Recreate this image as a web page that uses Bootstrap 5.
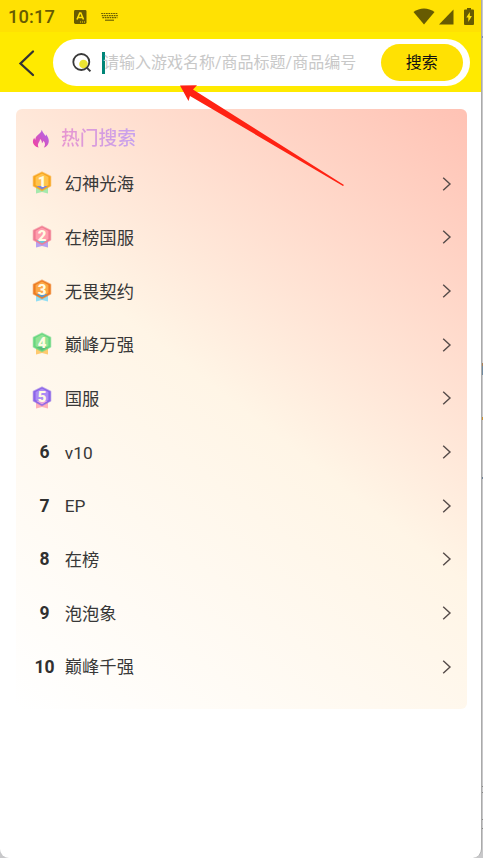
<!DOCTYPE html>
<html lang="zh-CN">
<head>
<meta charset="utf-8">
<meta name="viewport" content="width=device-width, initial-scale=1">
<title>搜索</title>
<link href="https://cdn.jsdelivr.net/npm/bootstrap@5.3.0/dist/css/bootstrap.min.css" rel="stylesheet">
<style>
html,body{height:858px;overflow:hidden}
body{background:#c8c8ca linear-gradient(#c8c8ca 0 36px,#8090b0 36px 38px,#c8c8ca 38px 363px,#a98058 363px 366px,#6f8aa0 366px 375px,#c8c8ca 375px 417px,#c89030 417px 420px,#c8c8ca 420px 477px,#6d7f94 477px 479px,#c8c8ca 479px 786px,#888 786px 787px,#c8c8ca 787px 792px,#888 792px 793px,#c8c8ca 793px 819px,#888 819px 820px,#c8c8ca 820px 828px,#888 828px 829px,#c8c8ca 829px);font-family:Roboto,"Noto Sans CJK SC",sans-serif;color:#333}
svg{display:block;flex:none}
.phone{width:482px;height:858px;background:#fff;border-right:1px solid #aaa;border-radius:0 0 9px 9px}
.statusbar{height:32px;background:#ffe103;color:#675b02;padding:1px 7px 0 8px}
.clock{font-size:18.3px;line-height:30px;width:66px;font-weight:500;letter-spacing:.1px}
.topbar{height:60px;background:#ffea00;padding:7px 11.5px 6px 17px}
.searchbox{height:47px;margin-left:16px;padding:0 6.5px 0 18px}
.caret{width:3px;height:22px;background:#008577;margin-left:9px}
.hint{font-size:16px;line-height:24px;color:#c8c8c8;margin-left:-2px;padding-top:1px}
.btn-search{width:82.5px;height:36.5px;background:#ffe103;color:#111;font-size:16px;line-height:24px;--bs-btn-padding-y:0;--bs-btn-border-width:0}
.btn-search{padding-top:1px}
.btn-search:hover{background:#ffd900}
.hot{margin:17px 14px 0 16px;height:600px;border-radius:6px;padding:12px 14px 0 15px;background:linear-gradient(38deg,#fff 0%,#fff5e6 50%,#ffc2b4 100%)}
.hot-title{height:36px;padding-bottom:1px}
.hot-title h1{font-size:18.8px;line-height:28px;font-weight:500;margin:0 0 0 10px;background:linear-gradient(90deg,#e796d0,#c6a2ee);-webkit-background-clip:text;background-clip:text;color:transparent}
.hot-row{height:53.67px}
.rank{width:33.8px;font-size:17.5px;font-weight:700;color:#303030}
.rank span{width:27px}
.rank svg{margin-top:-1px}
.word{font-size:17.3px;line-height:26px;color:#383838;padding-top:1px}
.pointer{left:178px;top:84px;z-index:3}
.hot-title h1,.word,.hint,.btn-search{white-space:nowrap}
</style>
</head>
<body>
<svg width="0" height="0" class="position-absolute" aria-hidden="true">
<defs>
<linearGradient id="flame" x1="1" y1="0" x2="0" y2="1"><stop stop-color="#a66cf2"/><stop offset="1" stop-color="#f63f9d"/></linearGradient>
<symbol id="next" viewBox="0 0 12 16"><path d="M2.2 1.8 9 8l-6.8 6.2" fill="none" stroke="#554b49" stroke-width="1.4"/></symbol>
<symbol id="medal" viewBox="0 0 20 23"><path d="M4 15v7.500l6-1.500 6 1.500V15z" fill="var(--ribbon)" opacity=".8"/><path d="M10 1.200 18.600 5.500v9.500L10 19.600 1.400 15V5.500z" fill="var(--edge)" stroke="var(--edge)" stroke-opacity=".55" stroke-width="1.400" stroke-linejoin="round"/><path d="M10 2.600 16.400 6v8L10 17.600 3.600 14V6z" fill="var(--face)"/><path d="M4.500 15h11L10 18.500z" fill="var(--base)"/></symbol>
</defs>
</svg>
<main class="phone position-relative">
<header>
<div class="statusbar d-flex align-items-center">
<span class="clock">10:17</span>
<svg width="13" height="14" viewBox="0 0 13 14"><rect width="12.5" height="14" rx="1.4" fill="#675b02"/><path d="M3 9.5 5.8 3h1L9.5 9.5M4.3 7.5h4" fill="none" stroke="#ffe103" stroke-width="1.6"/><path d="M6 12h1m1 0h1m1 0h1" stroke="#ffe103"/></svg>
<svg width="17" height="10" viewBox="0 0 17 10" fill="none" stroke="#675b02" stroke-width="1.2" style="margin-left:14px"><path d="M.2 1.5h17M.8 3.6h16M1.4 5.7h15" stroke-dasharray="1.7 .7"/><path d="M4 8.2h9" stroke-width="1.1"/></svg>
<svg class="ms-auto" width="22" height="17" viewBox="0 0 22 17"><path d="M.5 4.1C6.5-.7 15.5-.7 21.5 4.1L11 16.5z" fill="#675b02"/></svg>
<svg width="15" height="16" viewBox="0 0 15 16" class="ms-1"><path d="M14.5.5v15H0z" fill="#675b02"/></svg>
<svg width="10" height="17" viewBox="0 0 10 17" style="margin-left:10px"><path d="M3 0h4v1.6h2a1 1 0 0 1 1 1V16a1 1 0 0 1-1 1H1a1 1 0 0 1-1-1V2.600a1 1 0 0 1 1-1h2z" fill="#675b02"/><path d="M5.8 4 2.300 9.600h2v4.300L7.900 8h-2.100z" fill="#ffe103"/></svg>
</div>
<div class="topbar d-flex align-items-center">
<svg width="20" height="28" viewBox="0 0 20 28"><path d="M16 2.500 3.500 14.500 16 26" fill="none" stroke="#333" stroke-width="2.300" stroke-linecap="round"/></svg>
<div class="searchbox d-flex align-items-center flex-grow-1 bg-white rounded-pill">
<svg width="22" height="22" viewBox="0 0 22 22"><circle cx="12.500" cy="12" r="4.300" fill="#ece431"/><circle cx="10.300" cy="10" r="8" fill="none" stroke="#393939" stroke-width="1.800"/><path d="m15.600 15.400 3.800 4" stroke="#393939" stroke-width="2"/></svg>
<span class="caret"></span>
<span class="hint">请输入游戏名称/商品标题/商品编号</span>
<button type="button" class="btn btn-search rounded-pill ms-auto">搜索</button>
</div>
</div>
</header>
<section class="hot">
<div class="hot-title d-flex align-items-center">
<svg width="20" height="20" viewBox="0 0 20 20"><path d="M10.800.8c.6 2.600 2.500 4.100 3.700 6.200.5-.5.7-1.100.6-1.800 2.300 3.100 3.700 6.900 1.900 10-1 1.800-2.600 2.900-4.200 3.400 2.200-2.800 1-5.200-.4-6.800-.2 1.300-.7 2-1.500 2.500.2-1.800-.7-3.300-1.900-4.200.1 3.200-3.600 4.800-1.300 8.500C2 17 .5 12.600 3.200 8.700c.2 1 .6 1.600 1.200 2C4.300 6 9.700 5.800 10.800.8z" fill="url(#flame)"/></svg>
<h1>热门搜索</h1>
</div>
<div id="words"></div>
</section>
<svg class="pointer position-absolute" width="168" height="104" viewBox="178 84 168 104"><path d="M180 85.500 197 85.200 193 89.500 344 185 343 186 190 96 188.500 101z" fill="#ff2213"/></svg>
</main>
<script src="https://cdn.jsdelivr.net/npm/bootstrap@5.3.0/dist/js/bootstrap.bundle.min.js"></script>
<script>
const words=["幻神光海","在榜国服","无畏契约","巅峰万强","国服","v10","EP","在榜","泡泡象","巅峰千强"];
const medals=[["#f8a51f","#ffc34d","#8fe7a0","#7c83d8"],["#f07b91","#ff9dac","#a58cf2","#69c5dd"],["#ed7c22","#fca847","#75d8f7","#5c9bcc"],["#67d780","#91e394","#ffbe50","#5dbb7a"],["#8b65e8","#ad8cf5","#ff9fab","#e6a5dd"]];
document.getElementById("words").innerHTML=words.map((word,i)=>{
  const m=medals[i];
  const rank=m
    ?`<svg width="22" height="24" viewBox="-1 0 22 24" style="--edge:${m[0]};--face:${m[1]};--ribbon:${m[2]};--base:${m[3]}"><use href="#medal" width="20" height="23"/><text x="10" y="15.500" text-anchor="middle" font-family="Roboto" font-size="15" font-weight="900" fill="#fffbe2">${i+1}</text></svg>`
    :`<span class="text-center">${i+1}</span>`;
  return `<div class="hot-row d-flex align-items-center"><div class="rank d-flex">${rank}</div><span class="word">${word}</span><svg class="ms-auto" width="12" height="16"><use href="#next"/></svg></div>`;
}).join("");
</script>
</body>
</html>
